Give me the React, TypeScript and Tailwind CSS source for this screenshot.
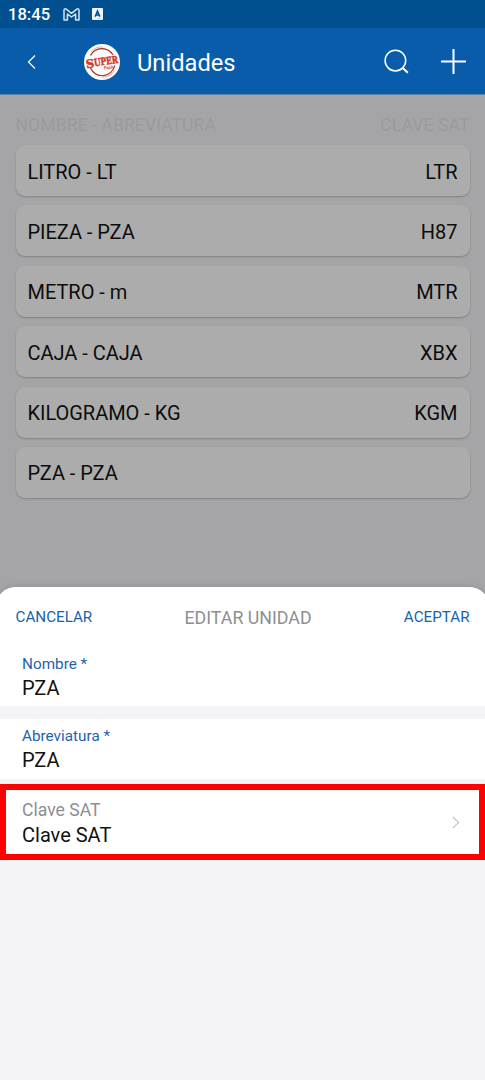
const units = [
  { name: "LITRO - LT", sat: "LTR" },
  { name: "PIEZA - PZA", sat: "H87" },
  { name: "METRO - m", sat: "MTR" },
  { name: "CAJA - CAJA", sat: "XBX" },
  { name: "KILOGRAMO - KG", sat: "KGM" },
  { name: "PZA - PZA", sat: "" },
];

function StatusBar() {
  return (
    <div className="flex h-7 items-center bg-[#005091] pl-2 text-white">
      <span className="w-[55px] pt-[3px] text-[16.6px] leading-none font-medium">18:45</span>
      <svg width="17" height="13" viewBox="0 0 17 13" fill="none" stroke="#d5e4f0" strokeWidth="1.5" strokeLinejoin="round">
        <path d="M1 12V2.2C1 .8 2.3.5 3.2 1.2L8.5 5.3l5.3-4.1c.9-.7 2.2-.4 2.2 1V12h-3.4V6L8.5 9 4.4 6v6z" />
      </svg>
      <svg className="ml-3" width="11" height="12" viewBox="0 0 11 12">
        <rect width="11" height="12" rx="1" fill="#eff5fa" />
        <path d="M3.2 8.6 5.5 3 7.8 8.6M4 7h3" fill="none" stroke="#005091" strokeWidth="1.6" />
        <path d="M5.5 10.5h3" stroke="#8db2d0" strokeWidth=".6" />
      </svg>
    </div>
  );
}

function Logo() {
  return (
    <svg className="ml-[47px] overflow-visible" width="36" height="36" viewBox="0 0 36 36">
      <circle cx="18" cy="18" r="18" fill="#fdfcfb" />
      <g fill="none">
        <path d="M6.5 11.5a12.8 12.8 0 0 1 22.5-.5" stroke="#a92d2b" strokeWidth="1.2" />
        <path d="M6.5 24a12.8 12.8 0 0 0 24.3-2.5" stroke="#a92d2b" strokeWidth="1.2" />
        <path d="M7 7.5A15.2 15.2 0 0 1 19 3" stroke="#efb28f" strokeWidth="1" />
        <path d="M18 33.2a15.2 15.2 0 0 0 12.5-6.5" stroke="#efb28f" strokeWidth="1" />
      </g>
      <g transform="rotate(-8 18 18)" fill="#cf3831" fontFamily="DejaVu Serif, serif" fontWeight="700">
        <g stroke="#cf3831" strokeWidth=".5">
          <text x="1.7" y="22" fontSize="11.5" textLength="8.3" lengthAdjust="spacingAndGlyphs">S</text>
          <text x="10" y="21.2" fontSize="10" textLength="24" lengthAdjust="spacingAndGlyphs">UPER</text>
        </g>
        <text x="19" y="25.8" fontSize="4.5" fontStyle="italic" textLength="10" lengthAdjust="spacingAndGlyphs">Papis</text>
      </g>
    </svg>
  );
}

function Header() {
  return (
    <header className="flex h-[67px] items-center border-b border-[#5b83a8] bg-[#085ca9] pt-px text-white">
      <svg className="ml-[27px]" width="10" height="16" viewBox="0 0 10 16" fill="none" stroke="currentColor" strokeWidth="1.2">
        <path d="M8 1.5 1.5 8 8 14.5" />
      </svg>
      <Logo />
      <h1 className="ml-[17px] grow pt-[4px] text-[23.7px] leading-none">Unidades</h1>
      <svg width="25" height="25" viewBox="0 0 25 25" fill="none" stroke="currentColor" strokeWidth="1.5">
        <circle cx="11.4" cy="11.6" r="10.3" />
        <path d="m18.5 18.7 5.3 5.1" strokeWidth="2" />
      </svg>
      <svg className="mr-[19px] ml-8" width="25" height="25" viewBox="0 0 25 25" fill="none" stroke="currentColor" strokeWidth="2">
        <path d="M0 12.5h25M12.5 0v25" />
      </svg>
    </header>
  );
}

function Field({ label, value }: { label: string; value: string }) {
  return (
    <div className="flex h-[60px] flex-col bg-white pl-[22px]">
      <label className="mt-[9px] text-[15.3px] leading-4 text-[#1f64aa]">{label}</label>
      <span className="mt-[5px] text-[20px] leading-[22px] text-[#111]">{value}</span>
    </div>
  );
}

export default function App() {
  return (
    <div className="flex h-[1080px] w-[485px] flex-col overflow-hidden bg-[#a5a5a7] font-['Roboto',sans-serif]">
      <StatusBar />
      <Header />

      <main className="h-[492px] shrink-0 px-[15.5px] pt-[21px]">
        <div className="flex h-[29px] justify-between text-[17.7px] leading-[19px] text-[#9a9a9c]">
          <span>NOMBRE - ABREVIATURA</span>
          <span>CLAVE SAT</span>
        </div>
        <ul className="flex flex-col gap-[9.4px]">
          {units.map((unit) => (
            <li
              key={unit.name}
              className="flex h-[51px] items-center justify-between rounded-[9px] bg-[#acacac] px-3 pt-0.5 text-[20px] tracking-[-0.03px] text-[#0c0c0c] shadow-[0_1px_2px_rgba(0,0,0,0.22)]"
            >
              <span>{unit.name}</span>
              <span>{unit.sat}</span>
            </li>
          ))}
        </ul>
      </main>

      {/* Bottom sheet */}
      <section className="-mx-1 flex grow flex-col rounded-t-[20px] bg-[#f3f3f8] px-1 shadow-[0_0_8px_rgba(0,0,0,0.12)]">
        <div className="-mx-1 flex h-[60px] items-center justify-between rounded-t-[20px] bg-white px-[19.5px] text-[15.2px] text-[#1763ae]">
          <button>CANCELAR</button>
          <h2 className="pt-[2px] text-[17.8px] text-[#8e8e93]">EDITAR UNIDAD</h2>
          <button>ACEPTAR</button>
        </div>
        <div className="-mb-px">
          <Field label="Nombre *" value="PZA" />
        </div>
        <div className="z-10 h-[13px] bg-[#f3f3f8]" />
        <Field label="Abreviatura *" value="PZA" />
        <div className="h-[5px]" />
        <div className="flex h-[76px] items-center justify-between border-[6px] border-[#ff0000] bg-white pr-[19px] pl-4">
          <div className="flex flex-col pt-0.5">
            <span className="text-[17.6px] leading-5 text-[#8e8e93]">Clave SAT</span>
            <span className="mt-1 text-[20px] leading-[22px] text-[#111]">Clave SAT</span>
          </div>
          <svg width="8" height="13" viewBox="0 0 8 13" fill="none" stroke="#c4c4c8" strokeWidth="1.2">
            <path d="m1 1 5.5 5.5L1 12" />
          </svg>
        </div>
      </section>
    </div>
  );
}
